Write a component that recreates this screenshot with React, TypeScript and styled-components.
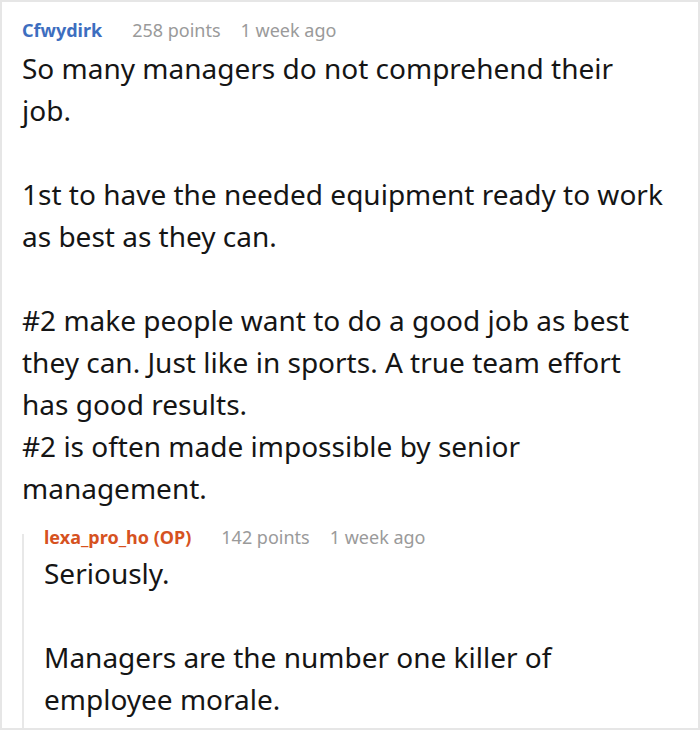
import React from "react";
import styled, { createGlobalStyle } from "styled-components";

const GlobalStyle = createGlobalStyle`
    html, body {
        margin: 0;
        padding: 0;
        background: #fff;
    }
    * {
        box-sizing: border-box;
    }
`;

const Frame = styled.div`
    width: 700px;
    height: 730px;
    overflow: hidden;
    border: 2px solid #e6e6e6;
    padding: 16px 35px 0 20px;
    font-family: "Noto Sans", "Open Sans", sans-serif;
    color: #151515;
`;

const Header = styled.div`
    display: flex;
    align-items: center;
    gap: 20px;
    font-size: 18px;
    line-height: 24px;
    white-space: nowrap;
`;

const Author = styled.span<{ $op?: boolean }>`
    font-weight: 700;
    color: ${(p) => (p.$op ? "#d6521f" : "#3d6ebf")};
    margin-right: 10px;
`;

const Meta = styled.span`
    color: #9a9a9a;
`;

const Body = styled.div`
    margin-top: 5px;
    font-size: 28px;
    line-height: 42px;
    white-space: pre-wrap;
`;

const Reply = styled.div`
    position: relative;
    margin-top: 16px;
    padding-left: 22px;

    &::before {
        content: "";
        position: absolute;
        left: 0;
        top: 9px;
        bottom: -9px;
        width: 2px;
        background: #e8e8e8;
    }
`;

const ReplyBody = styled(Body)`
    margin-top: 3px;
`;

interface Comment {
    author: string;
    op?: boolean;
    points: number;
    time: string;
    text: string;
}

const parent: Comment = {
    author: "Cfwydirk",
    points: 258,
    time: "1 week ago",
    text:
        "So many managers do not comprehend their job.\n\n1st to have the needed equipment ready to work as best as they can.\n\n#2 make people want to do a good job as best they can. Just like in sports. A true team effort has good results.\n#2 is often made impossible by senior management.",
};

const reply: Comment = {
    author: "lexa_pro_ho (OP)",
    op: true,
    points: 142,
    time: "1 week ago",
    text: "Seriously.\n\nManagers are the number one killer of employee morale.",
};

const CommentHeader = ({ c }: { c: Comment }) => (
    <Header>
        <Author $op={c.op}>{c.author}</Author>
        <Meta>{c.points} points</Meta>
        <Meta>{c.time}</Meta>
    </Header>
);

export default function App() {
    return (
        <>
            <GlobalStyle />
            <Frame>
                <CommentHeader c={parent} />
                <Body>{parent.text}</Body>
                <Reply>
                    <CommentHeader c={reply} />
                    <ReplyBody>{reply.text}</ReplyBody>
                </Reply>
            </Frame>
        </>
    );
}
